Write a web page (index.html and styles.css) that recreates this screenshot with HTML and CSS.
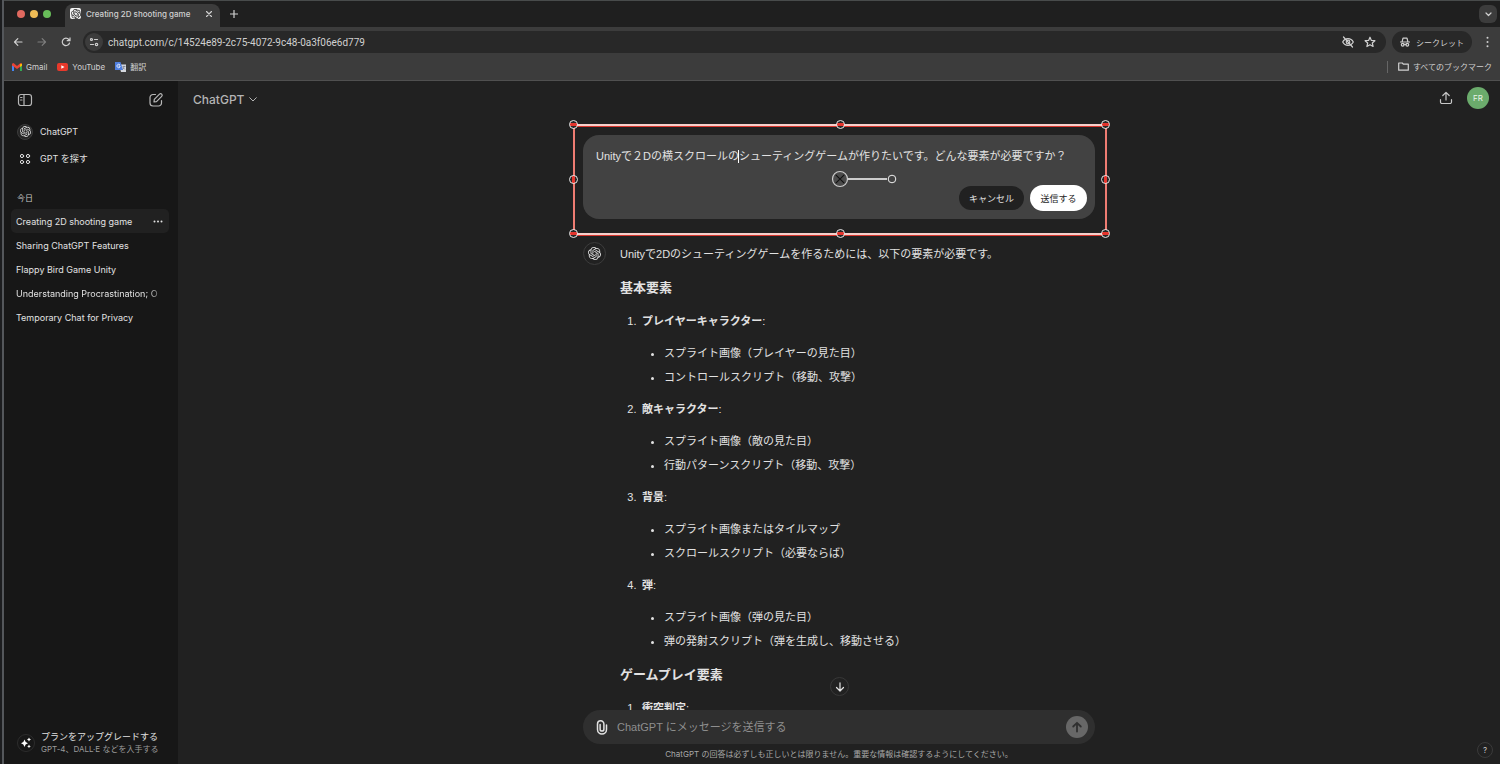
FILE: index.html
```html
<!DOCTYPE html>
<html lang="ja">
<head>
<meta charset="utf-8">
<title>Creating 2D shooting game</title>
<link rel="stylesheet" href="styles.css">
</head>
<body>
<svg class="sprite" aria-hidden="true">
  <symbol id="knot" viewBox="0 0 24 24"><path fill="currentColor" d="M22.2819 9.8211a5.9847 5.9847 0 0 0-.5157-4.9108 6.0462 6.0462 0 0 0-6.5098-2.9A6.0651 6.0651 0 0 0 4.9807 4.1818a5.9847 5.9847 0 0 0-3.9977 2.9 6.0462 6.0462 0 0 0 .7427 7.0966 5.98 5.98 0 0 0 .511 4.9107 6.051 6.051 0 0 0 6.5146 2.9001A5.9847 5.9847 0 0 0 13.2599 24a6.0557 6.0557 0 0 0 5.7718-4.2058 5.9894 5.9894 0 0 0 3.9977-2.9001 6.0557 6.0557 0 0 0-.7475-7.0729zm-9.022 12.6081a4.4755 4.4755 0 0 1-2.8764-1.0408l.1419-.0804 4.7783-2.7582a.7948.7948 0 0 0 .3927-.6813v-6.7369l2.02 1.1686a.071.071 0 0 1 .038.052v5.5826a4.504 4.504 0 0 1-4.4945 4.4944zm-9.6607-4.1254a4.4708 4.4708 0 0 1-.5346-3.0137l.142.0852 4.783 2.7582a.7712.7712 0 0 0 .7806 0l5.8428-3.3685v2.3324a.0804.0804 0 0 1-.0332.0615L9.74 19.9502a4.4992 4.4992 0 0 1-6.1408-1.6464zM2.3408 7.8956a4.485 4.485 0 0 1 2.3655-1.9728V11.6a.7664.7664 0 0 0 .3879.6765l5.8144 3.3543-2.0201 1.1685a.0757.0757 0 0 1-.071 0l-4.8303-2.7865A4.504 4.504 0 0 1 2.3408 7.872zm16.5963 3.8558L13.1038 8.364 15.1192 7.2a.0757.0757 0 0 1 .071 0l4.8303 2.7913a4.4944 4.4944 0 0 1-.6765 8.1042v-5.6772a.79.79 0 0 0-.407-.667zm2.0107-3.0231l-.142-.0852-4.7735-2.7818a.7759.7759 0 0 0-.7854 0L9.409 9.2297V6.8974a.0662.0662 0 0 1 .0284-.0615l4.8303-2.7866a4.4992 4.4992 0 0 1 6.6802 4.66zM8.3065 12.863l-2.02-1.1638a.0804.0804 0 0 1-.038-.0567V6.0742a4.4992 4.4992 0 0 1 7.3757-3.4537l-.142.0805L8.704 5.459a.7948.7948 0 0 0-.3927.6813zm1.0976-2.3654l2.602-1.4998 2.6069 1.4998v2.9994l-2.5974 1.4997-2.6067-1.4997Z"/></symbol>
</svg>

<div class="browser">
  <header class="chrome">
    <div class="tabstrip">
      <div class="lights"><span class="light red"></span><span class="light yellow"></span><span class="light green"></span></div>
      <div class="tab">
        <span class="favicon"><svg width="10" height="10"><use href="#knot"/></svg></span>
        <span class="tab-title">Creating 2D shooting game</span>
        <button class="plain" aria-label="タブを閉じる"><svg class="line" width="6" height="6" viewBox="0 0 6 6"><path d="M.5.5l5 5M5.5.5l-5 5"/></svg></button>
      </div>
      <button class="plain new-tab" aria-label="新しいタブ"><svg class="line" width="8" height="8" viewBox="0 0 8 8"><path d="M4 .3v7.4M.3 4h7.4"/></svg></button>
      <button class="plain tab-search" aria-label="タブを検索"><svg class="line" width="7" height="5" viewBox="0 0 7 5"><path d="M1 1l2.500 2.500L6 1"/></svg></button>
    </div>
    <div class="toolbar">
      <button class="plain" aria-label="戻る"><svg class="line" width="10" height="10" viewBox="0 0 10 10"><path d="M9 5H1.500M4.800 1.700L1.500 5l3.300 3.300"/></svg></button>
      <button class="plain dim" aria-label="進む"><svg class="line" width="10" height="10" viewBox="0 0 10 10"><path d="M1 5h7.500M5.200 1.700L8.500 5 5.200 8.300"/></svg></button>
      <button class="plain" aria-label="再読み込み"><svg class="line" width="10" height="10" viewBox="0 0 10 10"><path d="M8.500 6A3.700 3.700 0 1 1 7.800 2.500L9 3.700M9 .9v2.800H6.200"/></svg></button>
      <div class="omnibox">
        <button class="plain site-info" aria-label="サイト情報"><svg class="line" width="10" height="10" viewBox="0 0 10 10"><path d="M5.500 2.500H8.500M1.500 7.500h3"/><circle cx="2.500" cy="2.500" r="1"/><circle cx="7.500" cy="7.500" r="1.200"/></svg></button>
        <input class="url" type="text" aria-label="アドレス" value="chatgpt.com/c/14524e89-2c75-4072-9c48-0a3f06e6d779">
        <button class="plain" aria-label="追跡のブロック"><svg class="line" width="12" height="12" viewBox="0 0 12 12"><path d="M.7 6C3 1.500 9 1.500 11.300 6 9 10.500 3 10.500.7 6zM1.500 1l9 10"/><circle cx="6" cy="6" r="1.800"/></svg></button>
        <button class="plain" aria-label="ブックマークに追加"><svg class="line" width="12" height="12" viewBox="0 0 12 12"><path d="M6 1.200l1.400 3.200 3.500.3-2.600 2.300.8 3.500L6 8.700l-3.100 1.800.8-3.500L1.100 4.700l3.500-.3z"/></svg></button>
      </div>
      <button class="incognito"><svg class="line" width="10" height="10" viewBox="0 0 10 10"><path d="M0 5h10M2.200 4.500L3 1.200h4l.8 3.300M4 7.600q1-.6 2 0"/><circle cx="2.700" cy="7.700" r="1.400"/><circle cx="7.300" cy="7.700" r="1.400"/></svg>シークレット</button>
      <button class="plain" aria-label="メニュー"><svg width="3" height="12" viewBox="0 0 3 12" fill="currentColor"><circle cx="1.500" cy="1.800" r="1"/><circle cx="1.500" cy="6" r="1"/><circle cx="1.500" cy="10.200" r="1"/></svg></button>
    </div>
    <nav class="bookmarks">
      <a href="#"><svg width="10" height="8" viewBox="0 0 10 8"><path fill="#4285f4" d="M0 1h2v7H0z"/><path fill="#34a853" d="M8 1h2v7H8z"/><path fill="#ea4335" d="M0 .8L1.500 0 5 3 8.500 0 10 .8V2.500L5 6 0 2.500z"/><path fill="#fbbc04" d="M8 1.200L10 .5v2.200L8 4z"/></svg>Gmail</a>
      <a href="#"><svg width="11" height="8" viewBox="0 0 11 8"><rect width="11" height="8" rx="2" fill="#e8392b"/><path fill="#fff" d="M4.300 2.200v3.600L7.500 4z"/></svg>YouTube</a>
      <a href="#"><svg width="11" height="10" viewBox="0 0 11 10"><path fill="#d5d9df" d="M4 2.500h7V10H6z"/><path fill="#4f7fe0" d="M0 0h5.500L8 8H0z"/><path class="g-mark" d="M5 3A1.700 1.700 0 1 0 5 5V4H3.500"/><path class="x-mark" d="M7.500 4.500h3M9 3.800v.7Q8.800 6.500 7.500 7.500M8 5.500l2 2"/></svg>翻訳</a>
      <a href="#" class="all-bookmarks"><svg class="line" width="11" height="9" viewBox="0 0 11 9"><path d="M.7 1h3.600l1 1.200h5v6H.7z"/></svg>すべてのブックマーク</a>
    </nav>
  </header>

  <div class="app">
    <aside class="sidebar">
      <div class="side-top">
        <button class="plain" aria-label="サイドバーを閉じる"><svg class="line" width="16" height="16" viewBox="0 0 16 16"><rect x="1.500" y="2.500" width="13" height="11" rx="2.500"/><path d="M7 2.500v11M3.600 5.500h1.400M3.600 8h1.400"/></svg></button>
        <button class="plain" aria-label="新しいチャット"><svg class="line" width="16" height="16" viewBox="0 0 16 16"><path d="M7.500 2.500H5A3 3 0 0 0 2 5.500V11a3 3 0 0 0 3 3h5.500a3 3 0 0 0 3-3V8.500M6 10l.3-2.600L11.500 2.200a1.500 1.500 0 0 1 2.200 2.200L8.500 9.700z"/></svg></button>
      </div>
      <nav class="side-nav">
        <a href="#"><span class="ring small"><svg width="11" height="11"><use href="#knot"/></svg></span>ChatGPT</a>
        <a href="#"><span class="slot"><svg class="line thin" width="12" height="12" viewBox="0 0 12 12"><circle cx="3" cy="3" r="1.600"/><circle cx="9" cy="3" r="1.600"/><circle cx="3" cy="9" r="1.600"/><circle cx="9" cy="9" r="1.600"/></svg></span>GPT を探す</a>
      </nav>
      <h2 class="day">今日</h2>
      <nav class="history">
        <a href="#" class="current"><span>Creating 2D shooting game</span><svg width="10" height="3" viewBox="0 0 10 3" fill="currentColor"><circle cx="1.500" cy="1.500" r="1"/><circle cx="5" cy="1.500" r="1"/><circle cx="8.500" cy="1.500" r="1"/></svg></a>
        <a href="#"><span>Sharing ChatGPT Features</span></a>
        <a href="#"><span>Flappy Bird Game Unity</span></a>
        <a href="#"><span class="fade">Understanding Procrastination; O</span></a>
        <a href="#"><span>Temporary Chat for Privacy</span></a>
      </nav>
      <a href="#" class="upgrade">
        <span class="ring small"><svg width="12" height="12" viewBox="0 0 12 12" fill="#fff"><path d="M4.500 2.500Q5 5.500 8 6.200 5 7 4.500 10 4 7 1 6.200 4 5.500 4.500 2.500zM9 .5Q9.300 2.200 11 2.500 9.300 2.800 9 4.500 8.700 2.800 7 2.500 8.700 2.200 9 .5zM9 7.500q.3 1.500 1.800 1.800Q9.300 9.600 9 11.200 8.700 9.600 7.200 9.300 8.700 9 9 7.500z"/></svg></span>
        <span class="upgrade-text"><strong>プランをアップグレードする</strong><small>GPT-4、DALL·E などを入手する</small></span>
      </a>
    </aside>

    <main class="main">
      <div class="topbar">
        <button class="plain model">ChatGPT<svg class="line thin" width="8" height="5" viewBox="0 0 8 5"><path d="M.7.7L4 4 7.300.7"/></svg></button>
        <button class="plain share" aria-label="共有する"><svg class="line" width="14" height="14" viewBox="0 0 14 14"><path d="M7 9V1.500M3.800 4.500L7 1.300l3.200 3.200M1.500 8.500v2.500a1.500 1.500 0 0 0 1.500 1.500h8a1.500 1.500 0 0 0 1.500-1.500V8.500"/></svg></button>
        <button class="avatar">FR</button>
      </div>

      <div class="scroll">
        <div class="thread">
          <form class="edit">
            <textarea aria-label="メッセージを編集" rows="1">Unityで２Dの横スクロールのシューティングゲームが作りたいです。どんな要素が必要ですか？</textarea>
            <div class="actions"><button type="button" class="cancel">キャンセル</button><button type="button" class="send">送信する</button></div>
            <span class="caret"></span>
            <div class="frame">
              <i class="handle n w"></i><i class="handle n c"></i><i class="handle n e"></i>
              <i class="handle m w"></i><i class="handle m e"></i>
              <i class="handle s w"></i><i class="handle s c"></i><i class="handle s e"></i>
              <svg class="rotor" width="66" height="18" viewBox="0 0 66 18"><path d="M16.500 9H56" stroke="#ccc" stroke-width="2"/><circle cx="9" cy="9" r="7.500" fill="#4a4a4a" stroke="#ccc" stroke-width="1.200"/><path d="M4.800 4.800l8.400 8.400M13.200 4.800l-8.400 8.400" stroke="#111" stroke-width="1.200"/><circle cx="61" cy="9" r="3.800" fill="#424242" stroke="#eee"/></svg>
            </div>
          </form>

          <article class="reply">
            <span class="ring"><svg width="13" height="13"><use href="#knot"/></svg></span>
            <div class="prose">
              <p>Unityで2Dのシューティングゲームを作るためには、以下の要素が必要です。</p>
              <h3>基本要素</h3>
              <ol>
                <li><p><b>プレイヤーキャラクター</b>:</p><ul><li>スプライト画像（プレイヤーの見た目）</li><li>コントロールスクリプト（移動、攻撃）</li></ul></li>
                <li><p><b>敵キャラクター</b>:</p><ul><li>スプライト画像（敵の見た目）</li><li>行動パターンスクリプト（移動、攻撃）</li></ul></li>
                <li><p><b>背景</b>:</p><ul><li>スプライト画像またはタイルマップ</li><li>スクロールスクリプト（必要ならば）</li></ul></li>
                <li><p><b>弾</b>:</p><ul><li>スプライト画像（弾の見た目）</li><li>弾の発射スクリプト（弾を生成し、移動させる）</li></ul></li>
              </ol>
              <h3>ゲームプレイ要素</h3>
              <ol><li><p><b>衝突判定</b>:</p></li></ol>
            </div>
          </article>
        </div>
      </div>

      <div class="dock">
        <button class="to-bottom" aria-label="一番下へ"><svg class="line" width="10" height="10" viewBox="0 0 10 10"><path d="M5 .8v8M1.500 5.500L5 9l3.500-3.500"/></svg></button>
        <form class="composer">
          <button type="button" class="plain" aria-label="ファイルを添付"><svg class="line clip" width="14" height="16" viewBox="0 0 14 16"><path d="M11.500 6v4.500a4.500 4.500 0 0 1-9 0V5a3.200 3.200 0 0 1 6.400 0v5.200a1.900 1.900 0 0 1-3.800 0V5.500"/></svg></button>
          <input type="text" aria-label="メッセージ" placeholder="ChatGPT にメッセージを送信する">
          <button type="button" class="submit" aria-label="送信"><svg class="line" width="12" height="12" viewBox="0 0 12 12"><path d="M6 10.500V2M2.200 5.500L6 1.800l3.800 3.700"/></svg></button>
        </form>
        <p class="note">ChatGPT の回答は必ずしも正しいとは限りません。重要な情報は確認するようにしてください。</p>
      </div>
      <button class="help" aria-label="ヘルプ">?</button>
    </main>
  </div>
</div>
</body>
</html>
```
FILE: styles.css
```css
* { box-sizing: border-box; }
body { margin: 0; background: #1c1d1f; color: #e2e2e2; font-family: Inter, "Noto Sans CJK JP", sans-serif; font-size: 11px; }
button, input, textarea { font: inherit; color: inherit; border: 0; background: none; padding: 0; margin: 0; outline: 0; }
a { color: inherit; text-decoration: none; }
svg { display: block; flex: none; }
.sprite { position: absolute; width: 0; height: 0; }
.line { fill: none; stroke: currentColor; stroke-width: 1.200; stroke-linecap: round; stroke-linejoin: round; }
.line.thin { stroke-width: 1; }
.line.clip { stroke-width: 1.500; }
.plain { display: flex; align-items: center; justify-content: center; flex: none; }

.browser { height: 100vh; display: flex; flex-direction: column; border-left: 2px solid #54575b; margin-left: 2px; overflow: hidden; }
.chrome { background: #3c3c3c; color: #d0d0d0; border-bottom: 1px solid #505050; flex: none; }
.tabstrip { height: 27px; display: flex; align-items: flex-end; background: #1f1f1f; border-top: 1px solid #484b4b; padding-left: 13px; }
.lights { display: flex; gap: 5px; align-self: center; width: 48px; }
.light { width: 8px; height: 8px; border-radius: 50%; }
.red { background: #e0695f; }
.yellow { background: #eebb55; }
.green { background: #68bd59; }
.tab { width: 155px; height: 23px; display: flex; align-items: center; background: #3c3c3c; border-radius: 8px 8px 0 0; padding: 0 8px 4px 5px; gap: 5px; font-size: 8px; font-weight: 500; }
.tab-title { flex: 1; white-space: nowrap; }
.favicon { width: 11px; height: 11px; border-radius: 2px; background: #f4f4f4; color: #222; display: grid; place-items: center; }
.new-tab { width: 27px; align-self: center; }
.tab-search { width: 18px; height: 18px; background: #3c3c3c; border-radius: 6px; margin: 0 3px 0 auto; align-self: center; }

.toolbar { height: 30px; display: flex; align-items: center; padding: 0 11px 0 9px; gap: 14px; }
.dim { color: #7d7d7d; }
.omnibox { flex: 1; height: 22px; display: flex; align-items: center; gap: 10px; background: #282828; border-radius: 11px; padding: 0 10px 0 2px; margin: 0 -8px 0 -2px; }
.site-info { width: 18px; height: 18px; border-radius: 50%; background: #3c3c3c; }
.url { flex: 1; margin-left: -5px; font-family: Roboto, sans-serif; font-size: 10px; min-width: 0; }
.incognito { height: 22px; width: 80px; display: flex; align-items: center; justify-content: center; gap: 6px; background: #282828; border-radius: 11px; font-size: 8px; }
.bookmarks { height: 23px; display: flex; align-items: center; gap: 10px; padding: 0 8px 4px; font-size: 8px; }
.bookmarks a { display: flex; align-items: center; gap: 4px; }
.bookmarks .all-bookmarks { margin-left: auto; border-left: 1px solid #666; padding-left: 10px; height: 12px; }
.g-mark { fill: none; stroke: #fff; stroke-width: .8; }
.x-mark { fill: none; stroke: #667; stroke-width: .6; }

.app { flex: 1; min-height: 0; display: flex; background: #212121; }
.sidebar { width: 174px; flex: none; background: #171717; padding: 0 9px 9px 7px; display: flex; flex-direction: column; }
.side-top { height: 37px; display: flex; align-items: center; justify-content: space-between; padding: 0 5px 0 6px; color: #b8b8b8; }
.side-nav a { height: 27px; display: flex; align-items: center; gap: 7px; padding-left: 6px; font-size: 9px; }
.slot { width: 16px; display: grid; place-items: center; }
.ring { width: 23px; height: 23px; flex: none; border: 1px solid #3c3c3c; border-radius: 50%; display: grid; place-items: center; }
.ring.small { width: 16px; height: 16px; background: #262626; }
.day { font-size: 8px; font-weight: 400; line-height: 12px; margin: 20px 6px 5px; color: #c8c8c8; }
.history a { height: 24px; display: flex; align-items: center; justify-content: space-between; padding: 0 6px 0 5px; border-radius: 5px; font-size: 9px; }
.history .current { background: #212121; }
.history span { white-space: nowrap; }
.fade { mask-image: linear-gradient(to right, #000 132px, transparent 150px); }
.upgrade { margin-top: auto; display: flex; align-items: center; gap: 6px; padding-left: 6px; }
.upgrade .ring { width: 18px; height: 18px; background: none; border-color: #2c2c2c; }
.upgrade-text { display: flex; flex-direction: column; }
.upgrade strong { font-size: 9px; line-height: 13px; font-weight: 400; }
.upgrade small { font-size: 8px; line-height: 12px; color: #9b9b9b; }

.main { flex: 1; min-width: 0; display: flex; flex-direction: column; position: relative; }
.topbar { height: 37px; flex: none; display: flex; align-items: center; padding: 0 11px 0 15px; }
.model { gap: 5px; font-size: 12px; font-weight: 500; color: #b4b4b4; }
.share { margin: 0 14px 3px auto; color: #c8c8c8; }
.avatar { width: 22px; height: 22px; margin-bottom: 3px; border-radius: 50%; background: #6bab6c; color: #e8f3e8; font-size: 8px; }
.scroll { flex: 1; min-height: 0; overflow: hidden; }
.thread, .composer { width: 100%; max-width: 512px; margin: 0 auto; }
.thread { padding-top: 17px; }
.edit { position: relative; background: #424242; border-radius: 16px; padding: 12px 8px 8px 13px; display: flex; flex-direction: column; min-height: 84px; }
.edit textarea { display: block; width: 100%; height: 19px; line-height: 19px; resize: none; overflow: hidden; white-space: nowrap; font-family: "Liberation Sans", "Noto Sans CJK JP", sans-serif; }
.actions { display: flex; justify-content: flex-end; align-items: center; gap: 6px; margin-top: auto; font-size: 9px; }
.cancel { width: 65px; height: 24px; border-radius: 12px; background: #212121; }
.send { width: 57px; height: 26px; border-radius: 13px; background: #fff; color: #1d1d1d; }
.caret { position: absolute; left: 155px; top: 15px; width: 1px; height: 13px; background: #fff; }
.frame { position: absolute; inset: -11px -12px -16px -10px; border: 2px solid #f6cfcb; border-left-color: #ee7c72; border-right-color: #ee7c72; box-shadow: inset 0 1px #d8362e, 0 1px #d8362e; pointer-events: none; }
.handle { position: absolute; width: 9px; height: 9px; border: 1px solid #e8e8e8; border-radius: 50%; background: linear-gradient(#262626 0 2px, #e3342c 2px 5px, #262626 5px); }
.handle.m { background: linear-gradient(to right, #262626 0 2px, #e3342c 2px 5px, #262626 5px); }
.n { top: -6px; }
.m { top: calc(50% - 5px); }
.s { bottom: -5px; }
.w { left: -6px; }
.c { left: calc(50% - 4px); }
.e { right: -5px; }
.rotor { position: absolute; left: calc(50% - 9px); top: calc(50% - 10px); }

.reply { display: flex; gap: 14px; margin-top: 23px; }
.prose { font-family: "Liberation Sans", "Noto Sans CJK JP", sans-serif; line-height: 24px; }
.prose p { margin: 0; }
.prose h3 { font-size: 13px; line-height: 24px; margin: 10px 0 9px; }
@counter-style steps { system: extends decimal; suffix: ".\2002"; }
.prose ol, .prose ul { margin: 0; padding-left: 22px; }
.prose ol { list-style: steps; }
.prose ul { margin: 8px 0; list-style: disc; }

.dock { flex: none; position: relative; }
.composer { height: 34px; background: #2f2f2f; border-radius: 17px; display: flex; align-items: center; gap: 8px; padding: 0 7px 0 12px; }
.composer input { flex: 1; min-width: 0; font-family: "Liberation Sans", "Noto Sans CJK JP", sans-serif; }
.composer input::placeholder { color: #8e8e8e; opacity: 1; }
.submit { width: 22px; height: 22px; border-radius: 50%; background: #676767; color: #2f2f2f; display: grid; place-items: center; }
.submit .line { stroke-width: 1.800; }
.note { margin: 0; text-align: center; font-size: 8px; line-height: 20px; color: #a8a8a8; }
.to-bottom { position: absolute; left: calc(50% - 9px); top: -33px; width: 19px; height: 19px; border: 1px solid #383838; border-radius: 50%; background: #212121; display: grid; place-items: center; }
.help { position: absolute; right: 7px; bottom: 6px; width: 16px; height: 16px; border: 1px solid #3a3a3a; border-radius: 50%; font-size: 8px; color: #c8c8c8; }
```
